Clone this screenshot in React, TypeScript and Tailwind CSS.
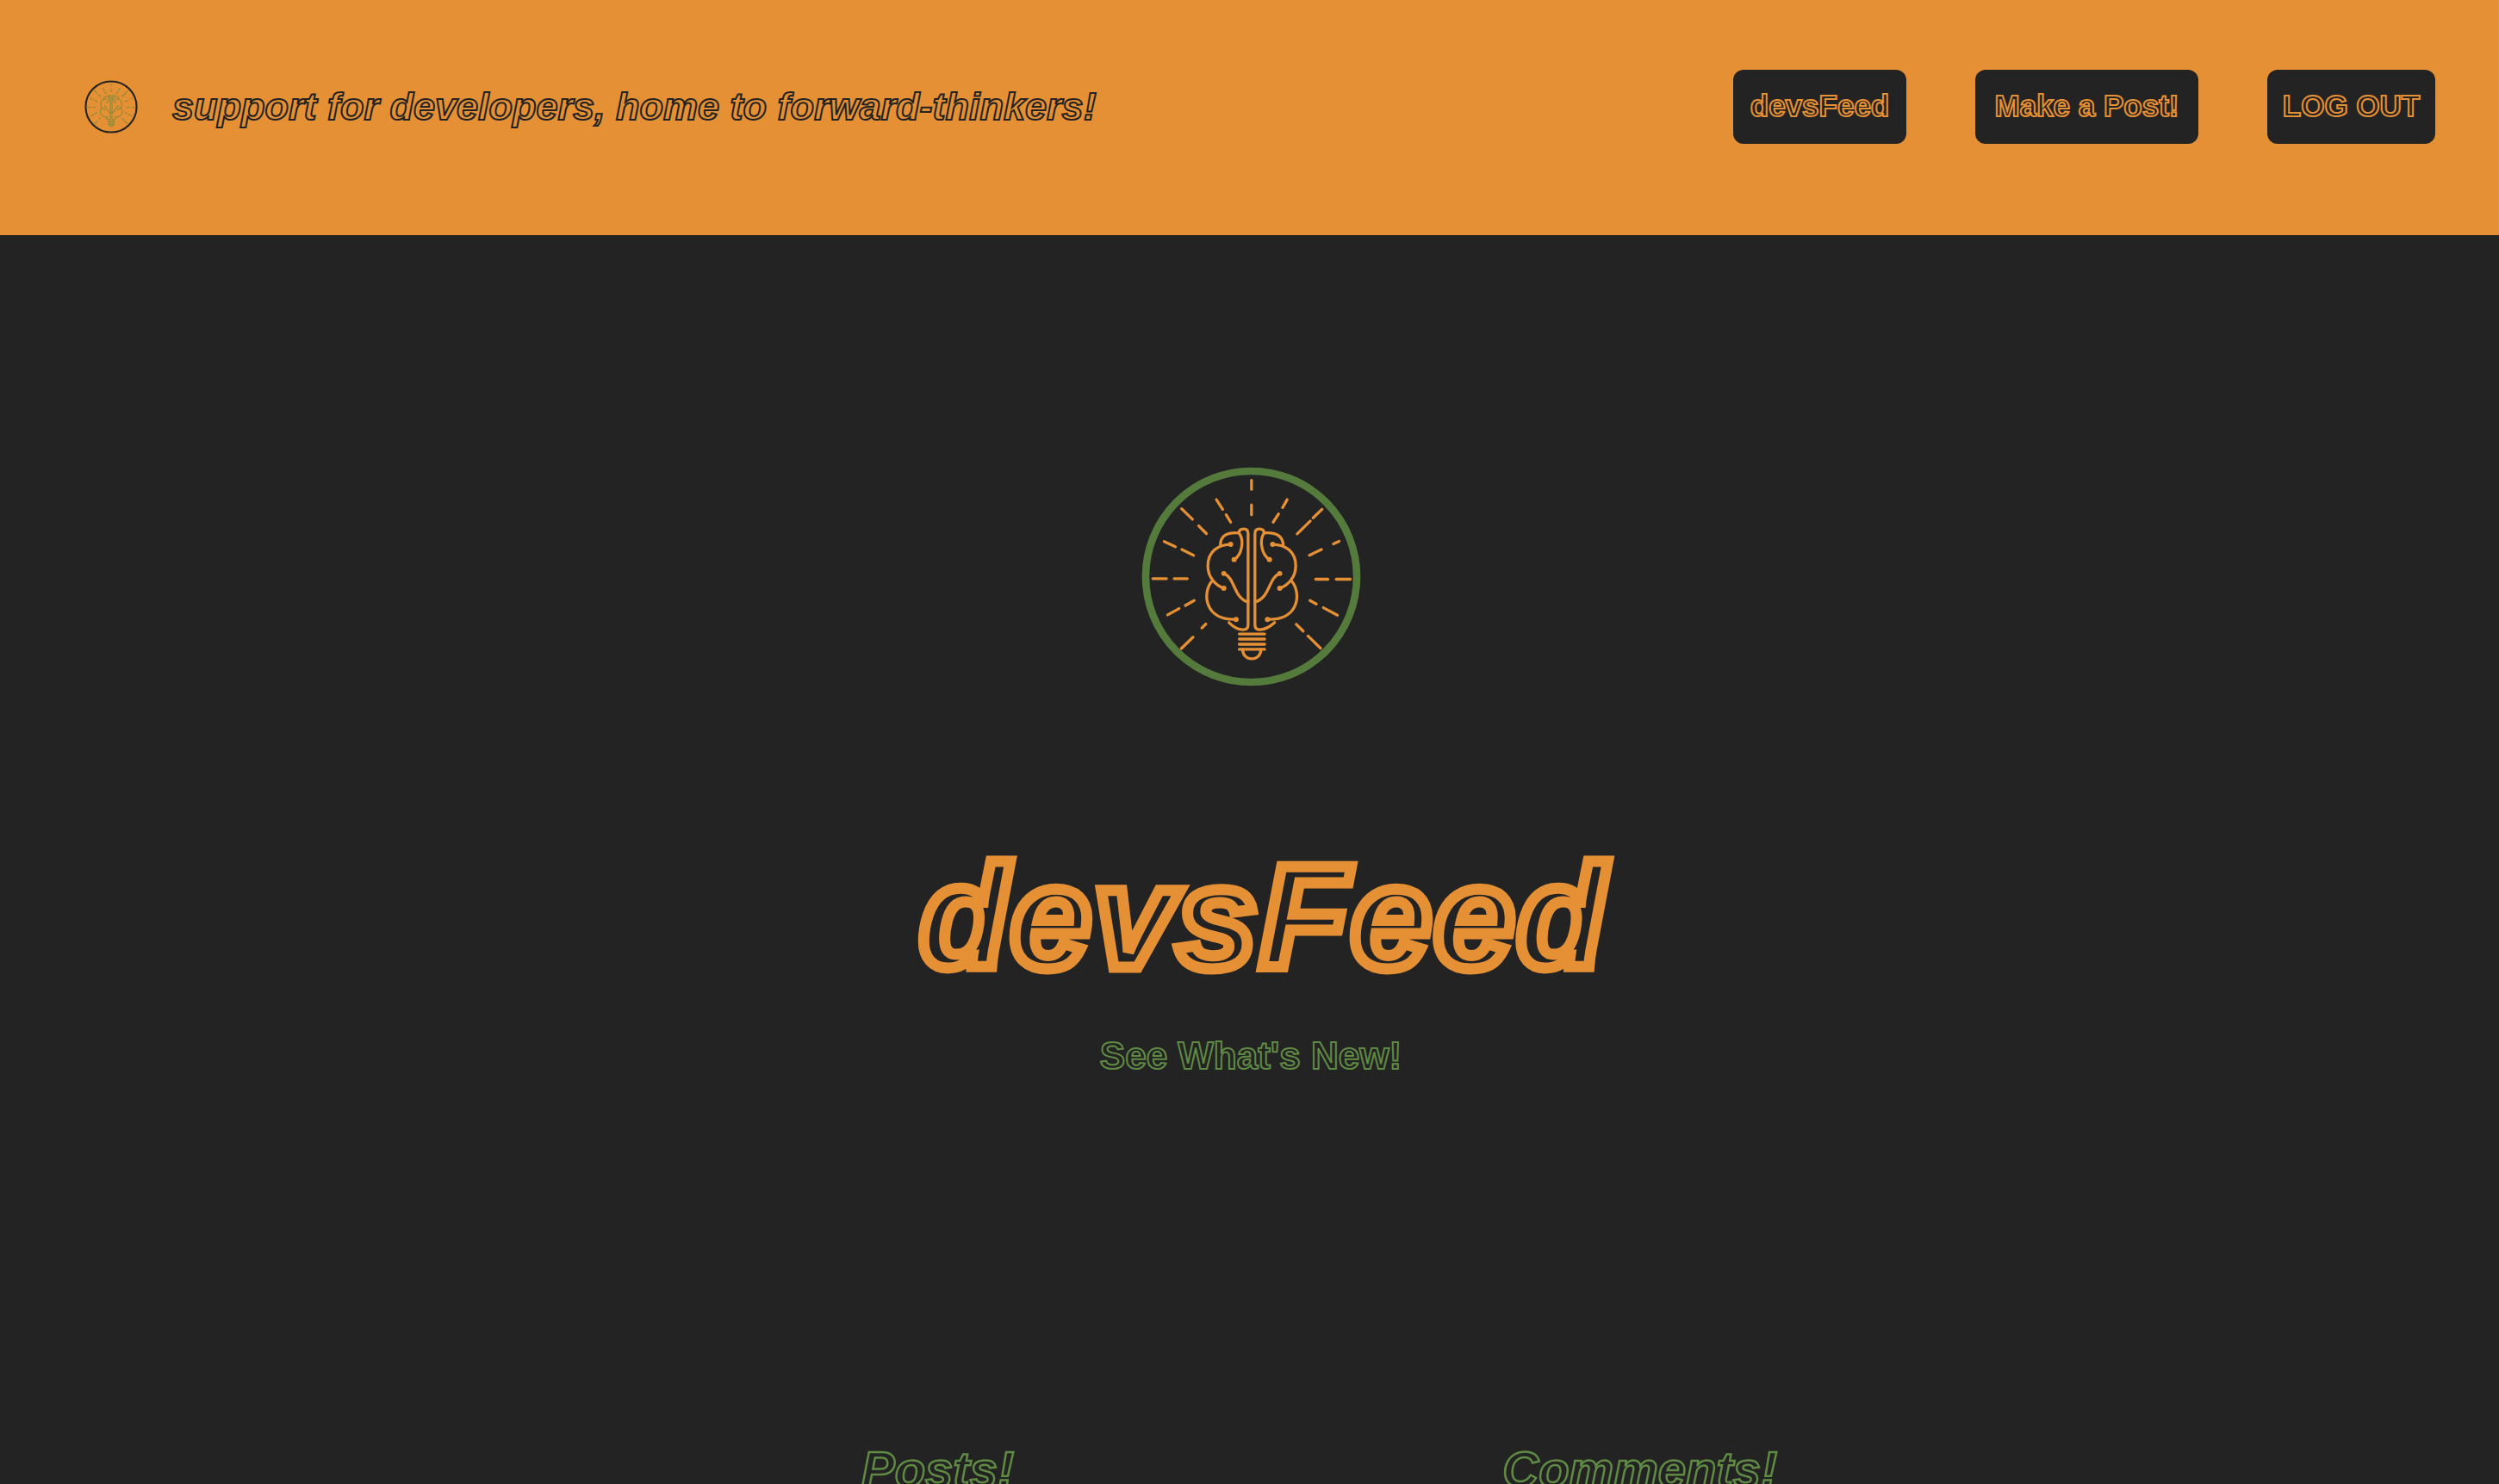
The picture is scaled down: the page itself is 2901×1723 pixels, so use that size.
import React from 'react';

const rays = [
  'M429 78V110', 'M429 164V199', 'M306 146L328 180', 'M340 199L356 225', 'M554 146L538 174', 'M524 196L505 225',
  'M184 178L222 215', 'M244 238L271 265', 'M676 180L645 210', 'M635 221L589 266', 'M123 293L162 311', 'M185 321L226 341',
  'M736 292L716 301', 'M674 321L632 341', 'M83 423H131', 'M158 423H204', 'M654 425H697', 'M726 425H775',
  'M228 500L197 517', 'M175 528L135 550', 'M634 500L656 512', 'M681 525L730 551', 'M269 582L255 596', 'M224 628L183 668',
  'M586 583L610 607', 'M627 624L671 667',
];

const brain = [
  'M417 500V585Q417 602 400 602Q375 602 350 577',
  'M417 500V265Q417 249 402 249Q385 249 385 263Q320 258 320 305',
  'M356 303C310 303 276 330 276 378C276 420 305 447 332 457',
  'M292 430C255 470 262 570 375 566',
  'M385 263C405 290 395 340 368 356',
  'M332 405C372 420 365 490 417 505',
  'M441 500V585Q441 602 458 602Q483 602 510 577',
  'M441 500V265Q441 249 456 249Q473 249 473 263Q538 258 540 305',
  'M503 303C550 303 584 330 584 378C584 420 555 447 528 457',
  'M568 430C605 470 598 570 485 566',
  'M473 263C455 290 465 340 492 356',
  'M528 405C488 420 495 490 441 505',
  'M386 617H475', 'M386 635H475', 'M386 653H475', 'M386 671H475',
  'M398 671C398 715 462 715 462 671',
];

const dots: [number, number][] = [
  [356, 303], [368, 356], [332, 405], [332, 457], [375, 566],
  [503, 303], [492, 356], [528, 405], [528, 457], [485, 566],
];

function Logo({ ring, line, weight, className }: { ring: string; line: string; weight: number; className: string }) {
  return (
    <svg viewBox="40 28 776 776" className={className} fill="none">
      <circle cx="428" cy="416" r="370" stroke={ring} strokeWidth="26" />
      <g stroke={line} strokeWidth={weight} strokeLinecap="round">
        {rays.map((d) => <path key={d} d={d} />)}
        {brain.map((d) => <path key={d} d={d} />)}
      </g>
      {dots.map(([cx, cy]) => <circle key={cx + '-' + cy} cx={cx} cy={cy} r="9" fill={line} />)}
    </svg>
  );
}

function NavButton({ label, width }: { label: string; width: string }) {
  return (
    <button className={width + ' h-[86px] rounded-xl bg-[#232323] text-[35px] font-bold text-[#232323] [-webkit-text-stroke:2px_#e69035]'}>
      {label}
    </button>
  );
}

export default function App() {
  return (
    <div className="h-screen overflow-hidden bg-[#232323] font-['Liberation_Sans',sans-serif]">
      <header className="h-[273px] bg-[#e69035] flex items-center justify-between pl-[98px] pr-[74px] pb-[26px]">
        <div className="flex items-center gap-[40px]">
          <Logo ring="#232323" line="#8d8a3a" weight={14} className="w-[62px] h-[62px]" />
          <p className="text-[45px] italic font-bold text-[#e69035] [-webkit-text-stroke:2px_#232323]">
            support for developers, home to forward-thinkers!
          </p>
        </div>
        <nav className="flex gap-[80px]">
          <NavButton label="devsFeed" width="w-[201px]" />
          <NavButton label="Make a Post!" width="w-[259px]" />
          <NavButton label="LOG OUT" width="w-[195px]" />
        </nav>
      </header>
      <main className="flex flex-col items-center pl-[3px]">
        <Logo ring="#547a3c" line="#e69035" weight={10} className="w-[257px] h-[257px] mt-[268px]" />
        <h1 className="mt-[183px] pl-[30px] text-[168px] leading-none italic font-bold tracking-[3px] text-[#232323] [-webkit-text-stroke:13px_#e69035]">
          devsFeed
        </h1>
        <h2 className="mt-[44px] text-[44px] font-bold text-[#232323] [-webkit-text-stroke:2px_#5f8a44]">
          See What's New!
        </h2>
      </main>
      <section className="flex pl-[1000px] gap-[567px] mt-[418px]">
        <h3 className="text-[58px] leading-none italic font-bold text-[#232323] [-webkit-text-stroke:2.5px_#5f8a44]">Posts!</h3>
        <h3 className="text-[58px] leading-none italic font-bold text-[#232323] [-webkit-text-stroke:2.5px_#5f8a44]">Comments!</h3>
      </section>
    </div>
  );
}
